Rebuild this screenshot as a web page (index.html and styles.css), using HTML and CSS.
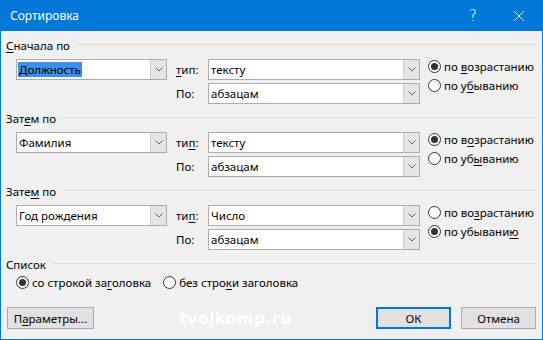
FILE: index.html
```html
<!DOCTYPE html>
<html lang="ru">
<head>
<meta charset="utf-8">
<title>Сортировка</title>
<link rel="stylesheet" href="styles.css">
</head>
<body>
<div class="window">
  <div class="titlebar">
    <div class="title">Сортировка</div>
    <div class="tb-btn help">?</div>
    <div class="tb-btn close">
      <svg width="10" height="10" viewBox="0 0 10 10"><path d="M0.5 0.5 L9.5 9.5 M9.5 0.5 L0.5 9.5" stroke="#fff" stroke-width="1" fill="none"/></svg>
    </div>
  </div>
  <div class="content">
    <div class="group">
      <div class="group-head"><span class="gl"><u>С</u>начала по</span><span class="line"></span></div>
      <div class="group-body">
        <div class="combo c-field"><span class="val sel">Должность</span><span class="arrow"><svg width="8" height="5" viewBox="0 0 8 5"><path d="M0.5 0.5 L4 4 L7.5 0.5" stroke="#606060" fill="none"/></svg></span></div>
        <div class="lbl r1"><span><u>т</u>ип:</span></div>
        <div class="combo c-type r1"><span class="val">тексту</span><span class="arrow"><svg width="8" height="5" viewBox="0 0 8 5"><path d="M0.5 0.5 L4 4 L7.5 0.5" stroke="#606060" fill="none"/></svg></span></div>
        <div class="lbl r2"><span>По:</span></div>
        <div class="combo c-type r2"><span class="val">абзацам</span><span class="arrow"><svg width="8" height="5" viewBox="0 0 8 5"><path d="M0.5 0.5 L4 4 L7.5 0.5" stroke="#606060" fill="none"/></svg></span></div>
        <div class="radios">
          <div class="radio"><span class="circle on"></span><span>по <u>в</u>озрастанию</span></div>
          <div class="radio"><span class="circle"></span><span>по у<u>б</u>ыванию</span></div>
        </div>
      </div>
    </div>

    <div class="group">
      <div class="group-head"><span class="gl">Зат<u>е</u>м по</span><span class="line"></span></div>
      <div class="group-body">
        <div class="combo c-field"><span class="val">Фамилия</span><span class="arrow"><svg width="8" height="5" viewBox="0 0 8 5"><path d="M0.5 0.5 L4 4 L7.5 0.5" stroke="#606060" fill="none"/></svg></span></div>
        <div class="lbl r1"><span>ти<u>п</u>:</span></div>
        <div class="combo c-type r1"><span class="val">тексту</span><span class="arrow"><svg width="8" height="5" viewBox="0 0 8 5"><path d="M0.5 0.5 L4 4 L7.5 0.5" stroke="#606060" fill="none"/></svg></span></div>
        <div class="lbl r2"><span>По:</span></div>
        <div class="combo c-type r2"><span class="val">абзацам</span><span class="arrow"><svg width="8" height="5" viewBox="0 0 8 5"><path d="M0.5 0.5 L4 4 L7.5 0.5" stroke="#606060" fill="none"/></svg></span></div>
        <div class="radios">
          <div class="radio"><span class="circle on"></span><span>по в<u>о</u>зрастанию</span></div>
          <div class="radio"><span class="circle"></span><span>по уб<u>ы</u>ванию</span></div>
        </div>
      </div>
    </div>

    <div class="group">
      <div class="group-head"><span class="gl">Зате<u>м</u> по</span><span class="line"></span></div>
      <div class="group-body">
        <div class="combo c-field"><span class="val">Год рождения</span><span class="arrow"><svg width="8" height="5" viewBox="0 0 8 5"><path d="M0.5 0.5 L4 4 L7.5 0.5" stroke="#606060" fill="none"/></svg></span></div>
        <div class="lbl r1"><span>ти<u>п</u>:</span></div>
        <div class="combo c-type r1"><span class="val">Число</span><span class="arrow"><svg width="8" height="5" viewBox="0 0 8 5"><path d="M0.5 0.5 L4 4 L7.5 0.5" stroke="#606060" fill="none"/></svg></span></div>
        <div class="lbl r2"><span>По:</span></div>
        <div class="combo c-type r2"><span class="val">абзацам</span><span class="arrow"><svg width="8" height="5" viewBox="0 0 8 5"><path d="M0.5 0.5 L4 4 L7.5 0.5" stroke="#606060" fill="none"/></svg></span></div>
        <div class="radios">
          <div class="radio"><span class="circle"></span><span>по во<u>з</u>растанию</span></div>
          <div class="radio"><span class="circle on"></span><span>по убывани<u>ю</u></span></div>
        </div>
      </div>
    </div>

    <div class="group">
      <div class="group-head"><span class="gl">Список</span><span class="line"></span></div>
      <div class="list-row">
        <div class="radio"><span class="circle on"></span><span>со строкой за<u>г</u>оловка</span></div>
        <div class="radio"><span class="circle"></span><span>без стро<u>к</u>и заголовка</span></div>
      </div>
    </div>

    <div class="buttons">
      <div class="btn params"><span>П<u>а</u>раметры...</span></div>
      <div class="spacer"></div>
      <div class="btn ok">ОК</div>
      <div class="btn">Отмена</div>
      <div class="watermark">tvojkomp.ru</div>
    </div>
  </div>
</div>
</body>
</html>
```

FILE: styles.css
```css
* { box-sizing: border-box; }
html, body { margin: 0; padding: 0; }
body {
  font-family: "Noto Sans", "Open Sans", sans-serif;
  font-size: 11.5px;
  color: #000;
  background: #f0f0f0;
}
u { text-decoration: underline; text-underline-offset: 2px; text-decoration-thickness: 1px; }

.window {
  width: 543px;
  height: 340px;
  border: 1px solid #0078d7;
  border-top: none;
  background: #f0f0f0;
  display: flex;
  flex-direction: column;
}
.titlebar {
  height: 31px;
  margin: 0 -1px;
  background: #0078d7;
  color: #fff;
  display: flex;
  align-items: center;
  flex: none;
}
.title {
  flex: 1;
  padding-left: 10px;
  font-size: 12px;
}
.tb-btn {
  width: 46px;
  height: 31px;
  display: flex;
  align-items: center;
  justify-content: center;
}
.help { font-size: 15px; font-family: "DejaVu Sans", sans-serif; font-weight: 300; }
.close { margin-right: 1px; }

.content {
  padding: 6px 6px 0 5px;
  display: flex;
  flex-direction: column;
  position: relative;
}
.group { margin-bottom: 6px; }
.group-head {
  display: flex;
  align-items: center;
  height: 16px;
}
.gl { white-space: nowrap; }
.line {
  flex: 1;
  height: 1px;
  background: #dcdcdc;
  margin-left: 6px;
  margin-top: -1px;
}
.group-body {
  margin-top: 6px;
  margin-left: 10px;
  display: grid;
  grid-template-columns: 151px 41px 212px auto;
  grid-template-rows: 21px 21px;
  row-gap: 3px;
}
.combo {
  border: 1px solid #adadad;
  background: #fff;
  display: flex;
  align-items: stretch;
  height: 21px;
}
.c-field { grid-column: 1; grid-row: 1; }
.c-type { grid-column: 3; }
.r1 { grid-row: 1; }
.r2 { grid-row: 2; }
.val {
  flex: 1;
  padding-left: 2px;
  display: flex;
  align-items: center;
  white-space: nowrap;
}
.val.sel { flex: none; margin: 2px 0 2px 1px; padding: 0 1px; background: #3d8ee6; }
.c-field .val.sel + .arrow { margin-left: auto; }
.arrow {
  width: 16px;
  flex: none;
  background: #e5e5e5;
  border-left: 1px solid #cfcfcf;
  display: flex;
  align-items: center;
  justify-content: center;
}
.lbl {
  grid-column: 2;
  padding-left: 9px;
  display: flex;
  align-items: center;
}
.radios {
  grid-column: 4;
  grid-row: 1 / span 2;
  padding-left: 8px;
  margin-top: -2px;
  display: flex;
  flex-direction: column;
}
.radio {
  display: flex;
  align-items: center;
  height: 19px;
  white-space: nowrap;
}
.circle {
  width: 13px;
  height: 13px;
  border: 1px solid #333;
  border-radius: 50%;
  background: #fff;
  margin-right: 3px;
  position: relative;
  flex: none;
}
.circle.on::after {
  content: "";
  position: absolute;
  left: 2px;
  top: 2px;
  width: 7px;
  height: 7px;
  border-radius: 50%;
  background: #333;
}
.list-row {
  display: flex;
  margin-left: 10px;
  margin-top: 2px;
  gap: 12px;
}
.list-row .radio { height: 16px; }

.buttons {
  display: flex;
  align-items: center;
  margin-top: 11px;
  gap: 10px;
  position: relative;
}
.spacer { flex: 1; }
.btn {
  height: 22px;
  width: 75px;
  border: 1px solid #adadad;
  background: #e1e1e1;
  display: flex;
  align-items: center;
  justify-content: center;
}
.btn.params { width: 87px; margin-left: 1px; }
.btn.ok { border: 2px solid #0078d7; }
.watermark {
  position: absolute;
  left: 173px;
  top: 2px;
  color: #fff;
  font-family: "DejaVu Sans", sans-serif;
  font-weight: bold;
  font-size: 16.5px;
}
```
